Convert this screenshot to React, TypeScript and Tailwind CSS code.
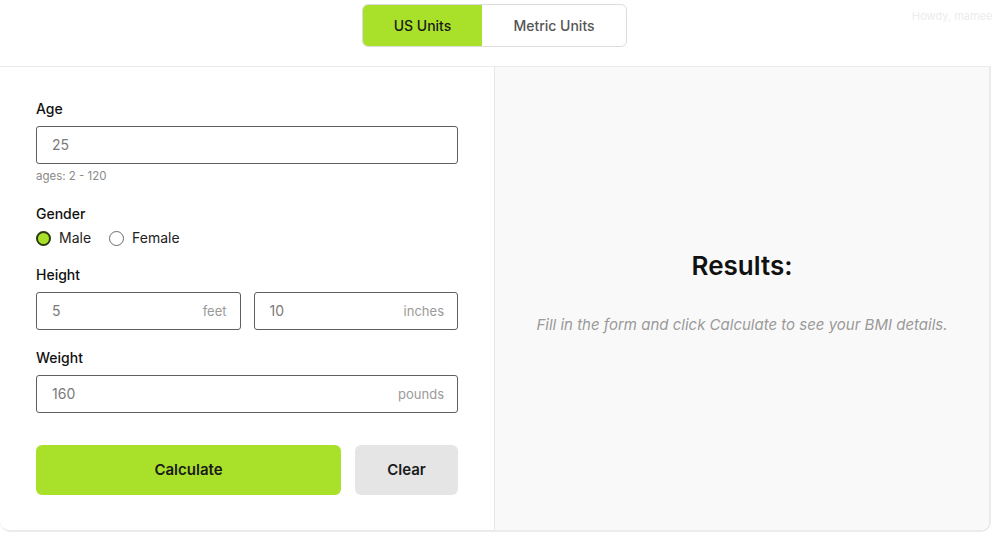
import React, { useState } from 'react';

const font = { fontFamily: 'Inter, "Noto Sans", sans-serif' };

const Field = ({ value, unit }: { value: string; unit?: string }) => (
  <div className="flex h-[38px] w-full items-center justify-between rounded-[3px] border border-[#5f5f5f] bg-white pl-[15px] pr-[13px]">
    <span className="text-[14px] leading-[20px] text-[#7a7a7a]">{value}</span>
    {unit && <span className="text-[13px] leading-[20px] text-[#9a9a9a]">{unit}</span>}
  </div>
);

const Radio = ({ checked, label, onClick }: { checked: boolean; label: string; onClick: () => void }) => (
  <button onClick={onClick} className="flex h-[20px] items-center gap-[8px]">
    {checked ? (
      <span className="h-[15px] w-[15px] rounded-full border-[2px] border-[#2c3a10] bg-[#a9e12a]" />
    ) : (
      <span className="h-[15px] w-[15px] rounded-full border border-[#6a6a6a] bg-white" />
    )}
    <span className="text-[14px] leading-[20px] text-[#222]">{label}</span>
  </button>
);

export default function App() {
  const [units, setUnits] = useState<'us' | 'metric'>('us');
  const [gender, setGender] = useState<'male' | 'female'>('male');

  return (
    <div className="relative h-[533px] w-[993px] overflow-hidden bg-white" style={font}>
      {/* Top bar */}
      <div className="flex h-[66px] items-start justify-center pr-[4px] pt-[4px]">
        <div className="flex h-[43px] overflow-hidden rounded-[6px] border border-[#dcdcdc] bg-white">
          <button
            onClick={() => setUnits('us')}
            className={`w-[119px] text-[14px] font-medium ${units === 'us' ? 'bg-[#a9e12a] text-[#1a1a1a]' : 'text-[#555]'}`}
          >
            US Units
          </button>
          <button
            onClick={() => setUnits('metric')}
            className={`w-[144px] text-[14px] font-medium ${units === 'metric' ? 'bg-[#a9e12a] text-[#1a1a1a]' : 'text-[#555]'}`}
          >
            Metric Units
          </button>
        </div>
      </div>
      <span className="absolute left-[912px] top-[8px] whitespace-nowrap text-[11px] text-[#ececec]">Howdy, mamee</span>

      {/* Card */}
      <div className="flex h-[466px] w-[991px] overflow-hidden rounded-b-[10px] border-r-[2px] border-b-[2px] border-t border-[#ebebeb]">
        <div className="flex w-[495px] flex-col border-r border-[#e6e6e6] pl-[36px] pr-[36px] pt-[32px]">
          <label className="text-[14px] font-medium leading-[20px] text-[#111]">Age</label>
          <div className="mt-[7px]">
            <Field value="25" />
          </div>
          <span className="mt-[5px] text-[11.5px] leading-[14px] text-[#8a8a8a]">ages: 2 - 120</span>

          <label className="mt-[21px] text-[14px] font-medium leading-[20px] text-[#111]">Gender</label>
          <div className="mt-[4px] flex items-center gap-[18px]">
            <Radio checked={gender === 'male'} label="Male" onClick={() => setGender('male')} />
            <Radio checked={gender === 'female'} label="Female" onClick={() => setGender('female')} />
          </div>

          <label className="mt-[17px] text-[14px] font-medium leading-[20px] text-[#111]">Height</label>
          <div className="mt-[7px] flex gap-[13px]">
            <Field value="5" unit="feet" />
            <Field value="10" unit="inches" />
          </div>

          <label className="mt-[18px] text-[14px] font-medium leading-[20px] text-[#111]">Weight</label>
          <div className="mt-[7px]">
            <Field value="160" unit="pounds" />
          </div>

          <div className="mt-[32px] flex gap-[14px]">
            <button className="h-[50px] w-[305px] rounded-[6px] bg-[#a9e12a] text-[15px] font-semibold text-[#1a1a1a]">
              Calculate
            </button>
            <button className="h-[50px] flex-1 rounded-[6px] bg-[#e5e5e5] text-[15px] font-semibold text-[#1a1a1a]">
              Clear
            </button>
          </div>
        </div>

        <div className="flex flex-1 flex-col items-center bg-[#f9f9f9] pt-[183px]">
          <h2 className="text-[26px] font-semibold leading-[32px] text-[#111]">Results:</h2>
          <p className="mt-[33px] text-[15px] italic leading-[20px] text-[#9a9a9a]">
            Fill in the form and click Calculate to see your BMI details.
          </p>
        </div>
      </div>
    </div>
  );
}
